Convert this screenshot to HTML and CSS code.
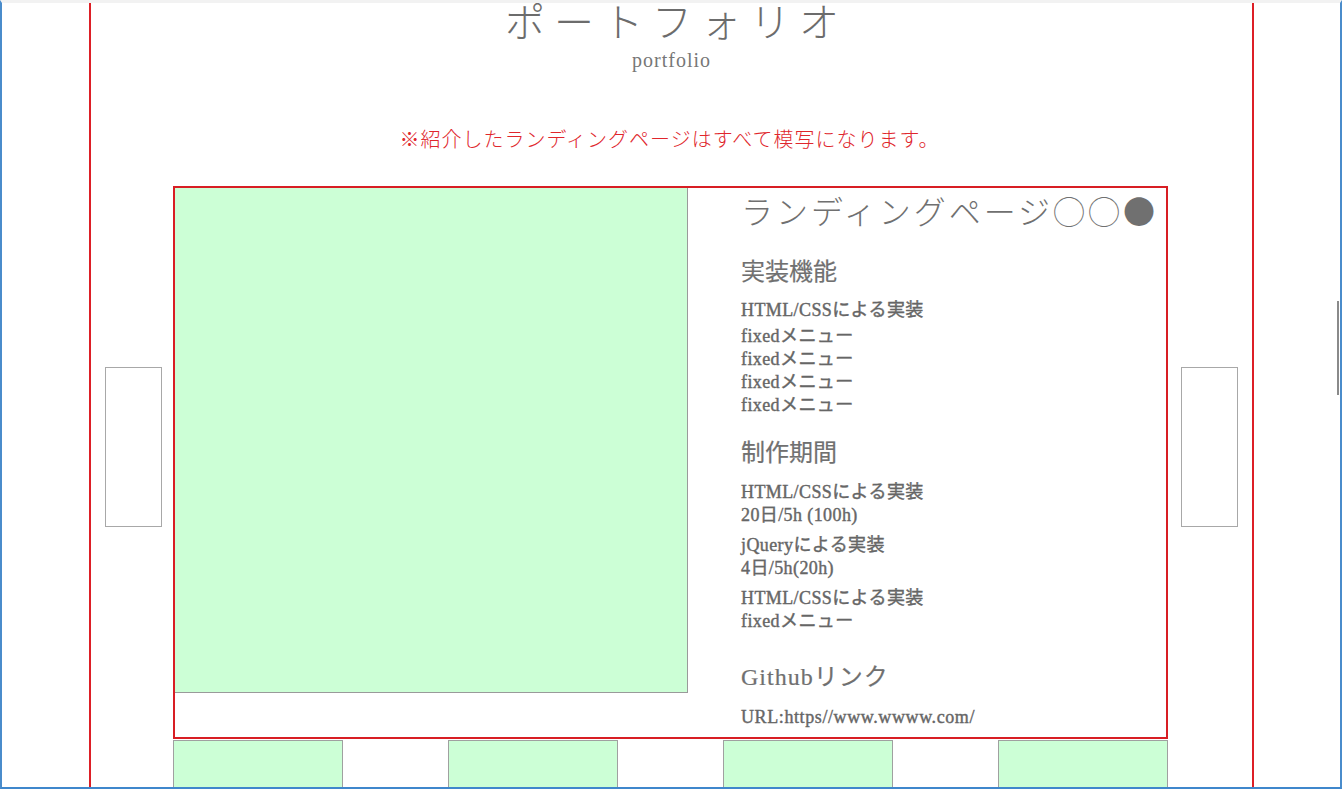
FILE: index.html
```html
<!DOCTYPE html>
<html lang="ja">
<head>
<meta charset="utf-8">
<title>ポートフォリオ</title>
<link rel="stylesheet" href="styles.css">
</head>
<body>
<div class="frame">
  <section class="portfolio">
    <h2 class="portfolio-title">ポートフォリオ</h2>
    <p class="portfolio-sub">portfolio</p>
    <p class="portfolio-note">※紹介したランディングページはすべて模写になります。</p>

    <div class="slider">
      <div class="slider-arrow slider-arrow--prev"></div>
      <article class="work-card">
        <div class="work-image"></div>
        <div class="work-info">
          <h3 class="work-title">ランディングページ◯◯●</h3>

          <h4 class="work-heading">実装機能</h4>
          <p class="work-lead">HTML/CSSによる実装</p>
          <ul class="work-list">
            <li>fixedメニュー</li>
            <li>fixedメニュー</li>
            <li>fixedメニュー</li>
            <li>fixedメニュー</li>
          </ul>

          <h4 class="work-heading work-heading--period">制作期間</h4>
          <div class="period-block">
            <p>HTML/CSSによる実装</p>
            <p>20日/5h (100h)</p>
          </div>
          <div class="period-block">
            <p>jQueryによる実装</p>
            <p>4日/5h(20h)</p>
          </div>
          <div class="period-block">
            <p>HTML/CSSによる実装</p>
            <p>fixedメニュー</p>
          </div>

          <h4 class="work-heading work-heading--link">Githubリンク</h4>
          <p class="work-url">URL:https//www.wwww.com/</p>
        </div>
      </article>
      <div class="slider-arrow slider-arrow--next"></div>
    </div>

    <div class="thumbs">
      <div class="thumb"></div>
      <div class="thumb"></div>
      <div class="thumb"></div>
      <div class="thumb"></div>
    </div>
  </section>
  <div class="scroll-thumb"></div>
</div>
</body>
</html>
```

FILE: styles.css
```css
* {
  box-sizing: border-box;
}

html, body {
  margin: 0;
  padding: 0;
  background: #ffffff;
}

body {
  font-family: "Liberation Serif", "Noto Sans CJK JP", serif;
  color: #666666;
}

.frame {
  position: relative;
  width: 1342px;
  height: 789px;
  overflow: hidden;
  background: #ffffff;
  border-top: 3px solid #f2f2f2;
  border-left: 2px solid #4a8ccb;
  border-right: 2px solid #4a8ccb;
  border-bottom: 2px solid #3f87cc;
}

.portfolio {
  width: 1165px;
  min-height: 1200px;
  margin: 0 0 0 87px;
  border-left: 2px solid #dd1f26;
  border-right: 2px solid #dd1f26;
  display: flex;
  flex-direction: column;
  align-items: center;
}

.portfolio-title {
  margin: -3px 0 0 0;
  padding-left: 10px;
  font-family: "Noto Sans CJK JP", sans-serif;
  font-weight: 300;
  font-size: 40px;
  line-height: 40px;
  letter-spacing: 9px;
  color: #6c6c6c;
}

.portfolio-sub {
  margin: 8px 0 0 0;
  font-size: 20px;
  line-height: 24px;
  letter-spacing: 1px;
  color: #777777;
}

.portfolio-note {
  margin: 53px 0 0 0;
  padding-right: 4px;
  font-family: "Noto Sans CJK JP", sans-serif;
  font-weight: 300;
  font-size: 20px;
  line-height: 28px;
  letter-spacing: 1px;
  color: #e0262c;
}

.slider {
  margin-top: 33px;
  display: flex;
  align-items: flex-start;
}

.slider-arrow {
  width: 57px;
  height: 160px;
  margin-top: 181px;
  border: 1px solid #a8a8a8;
  background: #ffffff;
}

.slider-arrow--prev {
  margin-right: 11px;
}

.slider-arrow--next {
  margin-left: 13px;
}

.work-card {
  width: 995px;
  height: 553px;
  border: 2px solid #d81e24;
  display: flex;
  align-items: flex-start;
}

.work-image {
  width: 513px;
  height: 505px;
  flex: none;
  background: #ccffd6;
  border-right: 1px solid #9a9a9a;
  border-bottom: 1px solid #9a9a9a;
}

.work-info {
  padding: 4px 0 0 53px;
  display: flex;
  flex-direction: column;
  align-items: flex-start;
}

.work-title {
  margin: 0;
  font-family: "Noto Sans CJK JP", sans-serif;
  font-weight: 300;
  font-size: 32px;
  line-height: 36px;
  letter-spacing: 3px;
  color: #707070;
  white-space: nowrap;
}

.work-heading {
  margin: 29px 0 0 0;
  font-family: "Liberation Serif", "Noto Sans CJK JP", serif;
  font-weight: 400;
  font-size: 24px;
  line-height: 30px;
  color: #707070;
  -webkit-text-stroke: 0.2px #707070;
}

.work-heading--period {
  margin-top: 21px;
}

.work-heading--link {
  margin-top: 29px;
  letter-spacing: 1px;
}

.work-lead,
.work-list li,
.period-block p,
.work-url {
  font-size: 18px;
  line-height: 23px;
  font-weight: 400;
  letter-spacing: 0.4px;
  color: #666666;
  -webkit-text-stroke: 0.4px #666666;
}

.work-lead {
  margin: 12px 0 0 0;
}

.work-list {
  list-style: none;
  margin: 3px 0 0 0;
  padding: 0;
}

.period-block {
  margin-top: 7px;
}

.period-block:first-of-type {
  margin-top: 13px;
}

.period-block p {
  margin: 0;
}

.work-url {
  margin: 14px 0 0 0;
  letter-spacing: 0.6px;
}

.thumbs {
  margin-top: 1px;
  margin-right: 2px;
  width: 995px;
  display: flex;
  gap: 105px;
}

.thumb {
  width: 170px;
  height: 140px;
  background: #ccffd6;
  border: 1px solid #a0a0a0;
}

.scroll-thumb {
  position: absolute;
  left: 1335px;
  top: 298px;
  width: 2px;
  height: 94px;
  background: #8a8a8a;
}
```
